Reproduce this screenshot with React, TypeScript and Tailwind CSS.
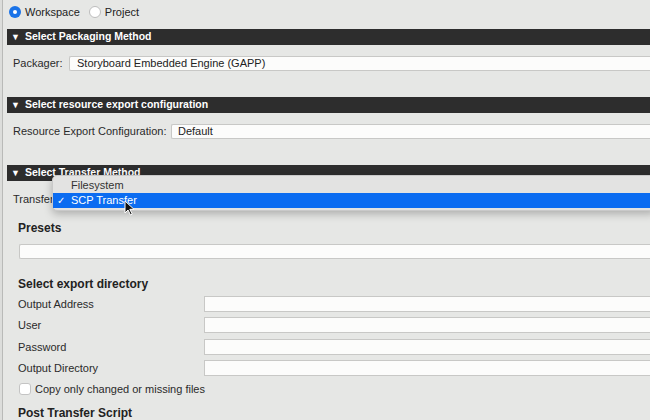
import React from "react"

const font = { fontFamily: '"Liberation Sans", Arial, sans-serif' }

const SectionHeader = ({ title }: { title: string }) => (
  <div className="h-[16px] bg-[#2d2d2d] flex items-center pl-[4px] text-white">
    <span className="text-[9px] leading-none mr-[5px]">▼</span>
    <span className="text-[10.5px] font-bold">{title}</span>
  </div>
)

const Field = ({ className = "", children }: { className?: string; children?: React.ReactNode }) => (
  <div
    className={
      "h-[15px] flex-1 bg-[#fcfcfb] border-t border-b border-l border-[#c8c8c6] rounded-l-[2px] flex items-center text-[11px] text-[#222] " +
      className
    }
  >
    {children}
  </div>
)

const LabeledRow = ({ label, mt }: { label: string; mt: string }) => (
  <div className={"flex items-center h-[16px] " + mt}>
    <span className="w-[197px] pl-[11px] text-[11px] text-[#2a2a2a]">{label}</span>
    <div className="flex-1 h-[16px] bg-[#fcfcfb] border-t border-b border-l border-[#c8c8c6]" />
  </div>
)

export default function App() {
  return (
    <div className="w-[650px] h-[420px] overflow-hidden bg-[#e6e7e5] flex relative" style={font}>
      <div className="w-[2px] bg-[#dcdddb]" />
      <div className="w-[1px] bg-[#b9bab8]" />
      <div className="flex-1 flex flex-col pl-[4px]">
        {/* scope */}
        <div className="mt-[4px] h-[16px] flex items-center text-[11px] text-[#222]">
          <span className="ml-[2px] w-[12px] h-[12px] rounded-full bg-[#1a73e8] flex items-center justify-center">
            <span className="w-[4px] h-[4px] rounded-full bg-white" />
          </span>
          <span className="ml-[4px]">Workspace</span>
          <span className="ml-[9px] w-[12px] h-[12px] rounded-full bg-white border border-[#bdbdbd]" />
          <span className="ml-[4px]">Project</span>
        </div>

        <div className="mt-[9px]">
          <SectionHeader title="Select Packaging Method" />
        </div>
        <div className="mt-[11px] flex items-center h-[15px]">
          <span className="w-[62px] pl-[6px] text-[11px] text-[#2a2a2a]">Packager:</span>
          <Field className="pl-[7px]">Storyboard Embedded Engine (GAPP)</Field>
        </div>

        <div className="mt-[26px]">
          <SectionHeader title="Select resource export configuration" />
        </div>
        <div className="mt-[11px] flex items-center h-[15px]">
          <span className="w-[164px] pl-[6px] text-[11px] text-[#2a2a2a]">Resource Export Configuration:</span>
          <Field className="pl-[6px]">Default</Field>
        </div>

        <div className="mt-[26px]">
          <SectionHeader title="Select Transfer Method" />
        </div>
        <div className="mt-[11px] flex items-center h-[15px]">
          {/* rest of the label sits under the open menu */}
          <span className="w-[100px] pl-[6px] text-[11px] text-[#2a2a2a] whitespace-nowrap">Transfer</span>
          <Field />
        </div>

        <div className="mt-[14px] pl-[11px] text-[12px] font-bold text-[#222] leading-[14px]">Presets</div>
        <div className="mt-[9px] ml-[12px] h-[15px] bg-[#fcfcfb] border-t border-b border-l border-[#c8c8c6] rounded-l-[2px]" />

        <div className="mt-[18px] pl-[11px] text-[12px] font-bold text-[#222] leading-[14px]">Select export directory</div>
        <LabeledRow label="Output Address" mt="mt-[5px]" />
        <LabeledRow label="User" mt="mt-[5px]" />
        <LabeledRow label="Password" mt="mt-[6px]" />
        <LabeledRow label="Output Directory" mt="mt-[5px]" />

        <div className="mt-[7px] flex items-center h-[12px] pl-[12px]">
          <span className="w-[12px] h-[12px] rounded-[3px] bg-white border border-[#c4c4c4]" />
          <span className="ml-[4px] text-[11px] text-[#2a2a2a]">Copy only changed or missing files</span>
        </div>

        <div className="mt-[11px] pl-[11px] text-[12px] font-bold text-[#222] leading-[14px]">Post Transfer Script</div>
      </div>

      {/* open popup menu */}
      <div className="absolute left-[52px] top-[175px] right-[-6px] h-[36px] bg-[#e3e3e2] rounded-[5px] border border-[#c9c9c9] shadow-[0_3px_8px_rgba(0,0,0,0.25)] flex flex-col pt-[2px] text-[11px]">
        <div className="h-[15px] flex items-center pl-[18px] text-[#333]">Filesystem</div>
        <div className="h-[15px] flex items-center bg-[#0b6cf1] text-white">
          <span className="w-[18px] pl-[4px] text-[10px]">✓</span>
          <span>SCP Transfer</span>
        </div>
      </div>

      {/* mouse pointer */}
      <svg className="absolute left-[124px] top-[200px]" width="11" height="16" viewBox="0 0 11 16">
        <path d="M1 1 L1 13 L4 10 L6.5 15 L8.3 14.2 L5.8 9.3 L10 9.3 Z" fill="#111" stroke="#fff" strokeWidth="1" />
      </svg>
    </div>
  )
}
